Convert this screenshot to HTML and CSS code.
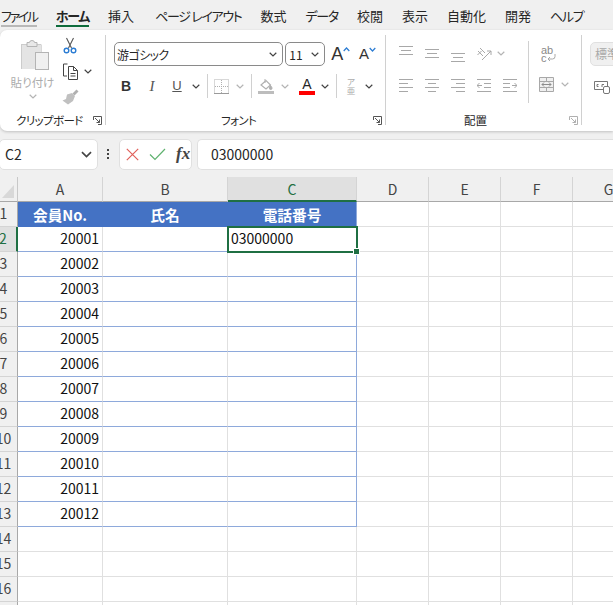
FILE: index.html
```html
<!DOCTYPE html>
<html lang="ja">
<head>
    <meta charset="UTF-8">
    <meta name="viewport" content="width=device-width, initial-scale=1.0">
    <title>Excel</title>
    <link rel="stylesheet" href="styles.css">
</head>
<body>
    <svg class="defs" width="0" height="0">
        <symbol id="chev" viewBox="0 0 8 5"><path d="M.7.8 4 4 7.3.8" fill="none" stroke="currentColor" stroke-width="1.2"/></symbol>
    </svg>

    <nav class="tabs">
        <span class="tab kana tab-file">ファイル</span>
        <span class="tab kana tab-active">ホーム</span>
        <span class="tab tab-insert">挿入</span>
        <span class="tab kana">ページ レイアウト</span>
        <span class="tab">数式</span>
        <span class="tab kana">データ</span>
        <span class="tab">校閲</span>
        <span class="tab">表示</span>
        <span class="tab">自動化</span>
        <span class="tab">開発</span>
        <span class="tab kana">ヘルプ</span>
    </nav>

    <section class="ribbon">
        <div class="group group-clip">
            <div class="group-body clip-body">
                <div class="paste">
                    <svg class="paste-icon" width="28" height="30" viewBox="0 0 28 30">
                        <path d="M.5 29V4.500H6M16 4.500h4V12" fill="#e4e4e4" stroke="#b4b4b4"/>
                        <path d="M.5 4.500h19.500V12H14V29H.500z" fill="#e4e4e4"/>
                        <path d="M6 6.500V2.500h2.500a2.500 2 0 0 1 5 0H16v4z" fill="#e8e8e8" stroke="#b4b4b4"/>
                        <rect x="14.500" y="12.500" width="13" height="17" fill="#f0f0f0" stroke="#b4b4b4"/>
                    </svg>
                    <span class="paste-label">貼り付け</span>
                    <svg class="chev chev-off"><use href="#chev"/></svg>
                </div>
                <div class="clip-tools">
                    <svg class="scissors" width="14" height="17" viewBox="0 0 14 17">
                        <path d="M3.500 1 8.500 11M10.500 1 5.500 11" fill="none" stroke="#555" stroke-width="1.100"/>
                        <circle cx="3.500" cy="13.500" r="2.300" fill="none" stroke="#2b7cd3" stroke-width="1.400"/>
                        <circle cx="10.500" cy="13.500" r="2.300" fill="none" stroke="#2b7cd3" stroke-width="1.400"/>
                    </svg>
                    <div class="copy-row">
                        <svg width="17" height="17" viewBox="0 0 17 17">
                            <path d="M5.500 1H1.500V13H5M6.500 3.500h5l4 4v9h-9zM11.500 3.500v4h4M8.500 10.500h5M8.500 13h5" fill="none" stroke="#444"/>
                        </svg>
                        <svg class="chev"><use href="#chev"/></svg>
                    </div>
                    <svg width="17" height="16" viewBox="0 0 17 16">
                        <path d="M10.500 4.500 14.500.5 16.500 2.500 12.500 6.500z" fill="#b0b0b0"/>
                        <path d="M5 5.500 10 4 13 7 11 12 6 15.500.5 11.500 4 10z" fill="#c0c0c0"/>
                    </svg>
                </div>
            </div>
            <div class="group-foot">
                <span></span><span class="kana-label">クリップボード</span>
                <svg class="launcher" width="9" height="9" viewBox="0 0 9 9"><path d="M.5 4V.5H8.500V8.500H5M2 2 6.500 6.500M6.500 3.500v3h-3" fill="none" stroke="#555"/></svg>
            </div>
        </div>

        <div class="group group-font">
            <div class="group-body">
                <div class="font-top">
                    <div class="combo combo-font"><span class="kana-label">游ゴシック</span><svg class="chev"><use href="#chev"/></svg></div>
                    <div class="combo combo-size"><span>11</span><svg class="chev"><use href="#chev"/></svg></div>
                    <div class="grow-btn"><span class="big-a">A</span><svg width="7" height="5" viewBox="0 0 7 5"><path d="M.7 4 3.500 1 6.300 4" fill="none" stroke="#2b7cd3" stroke-width="1.200"/></svg></div>
                    <div class="grow-btn"><span class="small-a">A</span><svg width="7" height="5" viewBox="0 0 7 5"><path d="M.7 1 3.500 4 6.300 1" fill="none" stroke="#2b7cd3" stroke-width="1.200"/></svg></div>
                </div>
                <div class="font-row">
                    <b class="fmt">B</b>
                    <i class="fmt fmt-i">I</i>
                    <u class="fmt fmt-u">U</u>
                    <svg class="chev"><use href="#chev"/></svg>
                    <span class="rule"></span>
                    <svg width="15" height="15" viewBox="0 0 15 15"><path d="M.5.500h14v14H.500z" fill="none" stroke="#b0b0b0" stroke-dasharray="1 1"/><path d="M7.500 1v13M1 7.500h13" stroke="#b0b0b0" stroke-dasharray="1 1"/><path d="M0 14.500h15" stroke="#9a9a9a"/></svg>
                    <svg class="chev chev-off"><use href="#chev"/></svg>
                    <span class="rule"></span>
                    <svg width="16" height="16" viewBox="0 0 16 16"><path d="M3 7 8 2.500 12.500 7 8 11z" fill="none" stroke="#b0b0b0" stroke-width="1.200"/><path d="M12.500 7.500c1 1.300 1.500 2 1.500 2.700a1.200 1.200 0 0 1-2.600 0c0-.7.400-1.400 1.100-2.700zM7 1v4" fill="#b0b0b0" stroke="#b0b0b0"/><rect y="13" width="16" height="3" fill="#bdbdbd"/></svg>
                    <svg class="chev chev-off"><use href="#chev"/></svg>
                    <div class="font-color"><span>A</span><i class="red-bar"></i></div>
                    <svg class="chev"><use href="#chev"/></svg>
                    <span class="rule"></span>
                    <div class="furigana"><span>ア</span><span>亜</span></div>
                    <svg class="chev"><use href="#chev"/></svg>
                </div>
            </div>
            <div class="group-foot">
                <span></span><span class="kana-label">フォント</span>
                <svg class="launcher" width="9" height="9" viewBox="0 0 9 9"><path d="M.5 4V.5H8.500V8.500H5M2 2 6.500 6.500M6.500 3.500v3h-3" fill="none" stroke="#555"/></svg>
            </div>
        </div>

        <div class="group group-align">
            <div class="group-body align-body">
                <div class="align-grid">
                    <svg width="14" height="16" viewBox="0 0 14 16"><path d="M0 .5h14M2 4.500h10M0 8.500h14"/></svg>
                    <svg width="14" height="16" viewBox="0 0 14 16"><path d="M0 3.500h14M2 7.500h10M0 11.500h14"/></svg>
                    <svg width="14" height="16" viewBox="0 0 14 16"><path d="M0 7.500h14M2 11.500h10M0 15.500h14"/></svg>
                    <svg width="16" height="16" viewBox="0 0 16 16"><path d="M6 14 15 5M15 5h-4M15 5v4M2 5l5 5M1.500 9l4-4M4 2l5 5"/></svg>
                    <svg class="chev chev-off chev-start"><use href="#chev"/></svg>
                    <svg width="14" height="13" viewBox="0 0 14 13"><path d="M0 .5h14M0 4.500h9M0 8.500h14M0 12.500h9"/></svg>
                    <svg width="14" height="13" viewBox="0 0 14 13"><path d="M0 .5h14M3 4.500h8M0 8.500h14M3 12.500h8"/></svg>
                    <svg width="14" height="13" viewBox="0 0 14 13"><path d="M0 .5h14M5 4.500h9M0 8.500h14M5 12.500h9"/></svg>
                    <svg width="14" height="13" viewBox="0 0 14 13"><path d="M0 .5h14M7 4.500h7M7 8.500h7M0 12.500h14M5 6.500H0M2.500 4 0 6.500 2.500 9"/></svg>
                    <svg width="14" height="13" viewBox="0 0 14 13"><path d="M0 .5h14M0 4.500h7M0 8.500h7M0 12.500h14M9 6.500h5M11.500 4 14 6.500 11.500 9"/></svg>
                </div>
                <span class="rule rule-tall"></span>
                <div class="wrap-col">
                    <div class="wrap-icon">
                        <span>ab</span>
                        <span class="wrap-low">c<svg width="9" height="8" viewBox="0 0 9 8"><path d="M8 0v2.500a2.500 2.500 0 0 1-2.500 2.500H1M3 3 1 5l2 2" fill="none" stroke="#a8a8a8"/></svg></span>
                    </div>
                    <div class="merge-row">
                        <svg width="15" height="15" viewBox="0 0 15 15"><path d="M.5.500h14v14H.500zM.5 4.500h14M.5 10.500h14M7.500.500v4M7.500 10.500v4" fill="#f0f0f0" stroke="#a8a8a8"/><path d="M3 7.500h9M5 5.500l-2 2 2 2M10 5.500l2 2-2 2" fill="none" stroke="#8c8c8c"/></svg>
                        <svg class="chev chev-off"><use href="#chev"/></svg>
                    </div>
                </div>
            </div>
            <div class="group-foot">
                <span></span><span>配置</span>
                <svg class="launcher launcher-off" width="9" height="9" viewBox="0 0 9 9"><path d="M.5 4V.5H8.500V8.500H5M2 2 6.500 6.500M6.500 3.500v3h-3" fill="none" stroke="#b0b0b0"/></svg>
            </div>
        </div>

        <div class="group-number">
            <div class="number-combo">標準</div>
            <svg width="16" height="14" viewBox="0 0 16 14"><path d="M.5 1.500h13v8H.500zM4.500 4.500H3v2h1.500M8 7V4.500h2" fill="none" stroke="#777"/><rect x="9.500" y="6.500" width="6" height="7" rx="1.500" fill="#fff" stroke="#777"/></svg>
        </div>
    </section>

    <section class="formula-bar">
        <div class="name-box"><span>C2</span><svg class="chev chev-lg"><use href="#chev"/></svg></div>
        <div class="dots"><i></i><i></i><i></i></div>
        <div class="fx-box">
            <svg width="13" height="13" viewBox="0 0 13 13"><path d="M.8.800 12.200 12.200M12.200.800.800 12.200" stroke="#e0605a" stroke-width="1.200"/></svg>
            <svg width="17" height="13" viewBox="0 0 17 13"><path d="M1 6.500 6 11.500 16 1" fill="none" stroke="#5fb26f" stroke-width="1.200"/></svg>
            <span class="fx">fx</span>
        </div>
        <div class="formula-input">03000000</div>
    </section>

    <main class="sheet">
        <div class="corner"><i></i></div>
        <div class="col-head">A</div>
        <div class="col-head">B</div>
        <div class="col-head col-on">C</div>
        <div class="col-head">D</div>
        <div class="col-head">E</div>
        <div class="col-head">F</div>
        <div class="col-head">G</div>

        <div class="row-head">1</div>
        <div class="cell th">会員No.</div><div class="cell th">氏名</div><div class="cell th th-end">電話番号</div><div class="cell"></div><div class="cell"></div><div class="cell"></div><div class="cell"></div>

        <div class="row-head row-on">2</div>
        <div class="cell td num">20001</div><div class="cell td"></div><div class="cell td td-end active">03000000<i class="handle"></i></div><div class="cell"></div><div class="cell"></div><div class="cell"></div><div class="cell"></div>

        <div class="row-head">3</div>
        <div class="cell td num">20002</div><div class="cell td"></div><div class="cell td td-end"></div><div class="cell"></div><div class="cell"></div><div class="cell"></div><div class="cell"></div>

        <div class="row-head">4</div>
        <div class="cell td num">20003</div><div class="cell td"></div><div class="cell td td-end"></div><div class="cell"></div><div class="cell"></div><div class="cell"></div><div class="cell"></div>

        <div class="row-head">5</div>
        <div class="cell td num">20004</div><div class="cell td"></div><div class="cell td td-end"></div><div class="cell"></div><div class="cell"></div><div class="cell"></div><div class="cell"></div>

        <div class="row-head">6</div>
        <div class="cell td num">20005</div><div class="cell td"></div><div class="cell td td-end"></div><div class="cell"></div><div class="cell"></div><div class="cell"></div><div class="cell"></div>

        <div class="row-head">7</div>
        <div class="cell td num">20006</div><div class="cell td"></div><div class="cell td td-end"></div><div class="cell"></div><div class="cell"></div><div class="cell"></div><div class="cell"></div>

        <div class="row-head">8</div>
        <div class="cell td num">20007</div><div class="cell td"></div><div class="cell td td-end"></div><div class="cell"></div><div class="cell"></div><div class="cell"></div><div class="cell"></div>

        <div class="row-head">9</div>
        <div class="cell td num">20008</div><div class="cell td"></div><div class="cell td td-end"></div><div class="cell"></div><div class="cell"></div><div class="cell"></div><div class="cell"></div>

        <div class="row-head">10</div>
        <div class="cell td num">20009</div><div class="cell td"></div><div class="cell td td-end"></div><div class="cell"></div><div class="cell"></div><div class="cell"></div><div class="cell"></div>

        <div class="row-head">11</div>
        <div class="cell td num">20010</div><div class="cell td"></div><div class="cell td td-end"></div><div class="cell"></div><div class="cell"></div><div class="cell"></div><div class="cell"></div>

        <div class="row-head">12</div>
        <div class="cell td num">20011</div><div class="cell td"></div><div class="cell td td-end"></div><div class="cell"></div><div class="cell"></div><div class="cell"></div><div class="cell"></div>

        <div class="row-head">13</div>
        <div class="cell td num">20012</div><div class="cell td"></div><div class="cell td td-end"></div><div class="cell"></div><div class="cell"></div><div class="cell"></div><div class="cell"></div>

        <div class="row-head">14</div>
        <div class="cell"></div><div class="cell"></div><div class="cell"></div><div class="cell"></div><div class="cell"></div><div class="cell"></div><div class="cell"></div>

        <div class="row-head">15</div>
        <div class="cell"></div><div class="cell"></div><div class="cell"></div><div class="cell"></div><div class="cell"></div><div class="cell"></div><div class="cell"></div>

        <div class="row-head">16</div>
        <div class="cell"></div><div class="cell"></div><div class="cell"></div><div class="cell"></div><div class="cell"></div><div class="cell"></div><div class="cell"></div>

        <div class="row-head row-cut"></div>
        <div class="cell"></div><div class="cell"></div><div class="cell"></div><div class="cell"></div><div class="cell"></div><div class="cell"></div><div class="cell"></div>
    </main>
</body>
</html>
```

FILE: styles.css
```css
* {
    box-sizing: border-box;
}
html, body {
    height: 100%;
}
body {
    margin: 0;
    overflow: hidden;
    background-color: #F0F0F0;
    color: #262626;
    font-family: "Noto Sans CJK JP", "Noto Sans", sans-serif;
    font-size: 14px;
    font-feature-settings: "palt";
}
svg {
    display: block;
}
.defs {
    position: absolute;
}
.chev {
    width: 8px;
    height: 5px;
    color: #444;
}
.chev-off {
    color: #b4b4b4;
}
.chev-lg {
    width: 11px;
    height: 7px;
}
.kana-label {
    letter-spacing: -0.6px;
}

/* タブ */
.tabs {
    display: flex;
    gap: 19px;
    height: 30px;
    padding-left: 1px;
    font-size: 13px;
}
.tab {
    height: 27px;
    padding-top: 4px;
    line-height: 24px;
    white-space: nowrap;
}
.kana {
    letter-spacing: -1.3px;
}
.tab-file {
    letter-spacing: -2.3px;
    border-bottom: 2px solid #B8B8B8;
}
.tab-active {
    font-weight: 700;
    border-bottom: 2px solid #0E6B3B;
}
.tab-insert {
    margin-right: 2px;
}

/* リボン */
.ribbon {
    display: flex;
    height: 101px;
    padding-top: 5px;
    background-color: #FFF;
    border-radius: 7px 0 0 7px;
    box-shadow: 0 1px 3px rgba(0, 0, 0, 0.2);
    overflow: hidden;
}
.group {
    flex: none;
    height: 90px;
    border-right: 1px solid #D0D0D0;
}
.group-clip {
    width: 106px;
}
.group-font {
    width: 280px;
}
.group-align {
    width: 196px;
}
.group-body {
    height: 78px;
}
.group-foot {
    display: grid;
    grid-template-columns: 1fr auto 1fr;
    align-items: center;
    height: 12px;
    padding-right: 3px;
    font-size: 11.5px;
    line-height: 14px;
}
.group-clip .group-foot {
    grid-template-columns: 16px auto 1fr;
}
.group-font .group-foot {
    grid-template-columns: 115px auto 1fr;
}
.group-align .group-foot {
    grid-template-columns: 78px auto 1fr;
}
.launcher {
    justify-self: end;
}
.rule {
    width: 1px;
    height: 24px;
    background-color: #D0D0D0;
}
.rule-tall {
    flex: none;
    height: 62px;
    margin-top: 6px;
}

/* クリップボード */
.clip-body {
    display: flex;
    padding-top: 5px;
}
.paste {
    display: flex;
    flex: none;
    flex-direction: column;
    align-items: center;
    width: 65px;
}
.paste-icon {
    margin-left: 4px;
}
.paste-label {
    margin-top: 2px;
    color: #ACACAC;
    font-size: 11.5px;
    line-height: 20px;
}
.paste .chev {
    margin-top: 2px;
}
.clip-tools {
    display: flex;
    flex-direction: column;
    gap: 9px;
    margin: -3px 0 0 -3px;
}
.scissors {
    margin-left: 1px;
}
.copy-row {
    display: flex;
    align-items: center;
    gap: 5px;
}

/* フォント */
.group-font .group-body {
    padding: 7px 0 0 8px;
}
.font-top {
    display: flex;
    align-items: center;
    height: 24px;
}
.combo {
    display: flex;
    align-items: center;
    justify-content: space-between;
    height: 24px;
    padding: 0 5px 0 2px;
    border: 1px solid #8A8A8A;
    border-radius: 5px;
    font-size: 12px;
}
.combo-font {
    width: 170px;
}
.combo-size {
    width: 40px;
    margin: 0 6px 0 2px;
    padding-left: 3px;
}
.grow-btn {
    display: flex;
    align-items: flex-start;
    width: 27px;
    height: 22px;
    line-height: 22px;
    font-family: "Liberation Sans", sans-serif;
}
.grow-btn svg {
    margin-top: 4px;
}
.big-a {
    font-size: 18px;
    color: #333;
}
.small-a {
    margin-left: 1px;
    font-size: 15px;
    color: #333;
}
.font-row {
    display: grid;
    grid-template-columns: 24px 28px 22px 16px 6px 23px 14px 8px 22px 16px 28px 8px 14px 16px 20px;
    justify-items: center;
    align-items: center;
    height: 24px;
    margin-top: 8px;
}
.fmt {
    font-family: "Liberation Sans", sans-serif;
    font-size: 14px;
    line-height: 18px;
    color: #333;
}
.fmt-i {
    font-family: "Liberation Serif", serif;
    font-size: 15px;
    color: #555;
}
.fmt-u {
    font-size: 13px;
    color: #555;
}
.font-color {
    display: flex;
    flex-direction: column;
    align-items: center;
    width: 16px;
    font-family: "Liberation Sans", sans-serif;
    font-size: 14px;
    line-height: 14px;
}
.red-bar {
    width: 16px;
    height: 4px;
    background-color: #F00;
}
.furigana {
    display: flex;
    flex-direction: column;
    align-items: center;
    color: #ACACAC;
    font-size: 8.5px;
    line-height: 9px;
}

/* 配置 */
.align-body {
    display: flex;
    padding: 11px 0 0 7px;
}
.align-body .rule-tall {
    margin: -5px 0 0 5px;
}
.align-grid {
    display: grid;
    grid-template-columns: repeat(5, 26px);
    grid-auto-rows: 33px;
    justify-items: center;
    align-items: start;
    width: 130px;
}
.align-grid path {
    fill: none;
    stroke: #A8A8A8;
}
.align-grid .chev {
    margin-top: 5px;
}
.align-grid .chev path {
    stroke: currentColor;
}
.chev-start {
    justify-self: start;
}
.wrap-col {
    display: flex;
    flex-direction: column;
    gap: 15px;
    margin-left: 10px;
}
.wrap-icon {
    display: flex;
    flex-direction: column;
    height: 16px;
    padding-left: 2px;
    color: #8A8A8A;
    font-family: "Liberation Sans", sans-serif;
    font-size: 11px;
    line-height: 8px;
}
.wrap-low {
    display: flex;
    align-items: center;
}
.merge-row {
    display: flex;
    align-items: center;
    gap: 7px;
}

/* 数値 */
.group-number {
    display: flex;
    flex-direction: column;
    gap: 14px;
    padding: 7px 0 0 8px;
}
.number-combo {
    width: 60px;
    height: 24px;
    padding-left: 4px;
    background-color: #F0F0F0;
    border: 1px solid #E0E0E0;
    border-radius: 5px;
    color: #A8A8A8;
    font-size: 12px;
    line-height: 22px;
}
.group-number svg {
    margin-left: 4px;
}

/* 数式バー */
.formula-bar {
    display: flex;
    align-items: center;
    height: 46px;
}
.name-box {
    display: flex;
    align-items: center;
    justify-content: space-between;
    flex: none;
    width: 99px;
    height: 31px;
    margin-left: -1px;
    padding: 0 5px;
    background-color: #FFF;
    border: 1px solid #E0E0E0;
    border-radius: 5px;
}
.dots {
    display: flex;
    flex-direction: column;
    gap: 2px;
    margin: 0 10px 0 9px;
}
.dots i {
    width: 2px;
    height: 2px;
    background-color: #444;
}
.fx-box {
    display: flex;
    align-items: center;
    flex: none;
    gap: 10px;
    width: 73px;
    height: 31px;
    padding-left: 6px;
    background-color: #FFF;
    border: 1px solid #E0E0E0;
    border-radius: 5px;
}
.fx {
    color: #444;
    font-family: "Liberation Serif", serif;
    font-size: 17px;
    font-style: italic;
    font-weight: 700;
}
.formula-input {
    flex: 1;
    height: 31px;
    margin-left: 5px;
    padding-left: 13px;
    background-color: #FFF;
    border: 1px solid #E0E0E0;
    border-right: 0;
    border-radius: 5px 0 0 5px;
    line-height: 28px;
}

/* シート */
.sheet {
    display: grid;
    grid-template-columns: 18px 85px 125px 129px 72px 72px 72px 72px;
    grid-auto-rows: 25px;
    height: 428px;
    overflow: hidden;
    background-color: #FFF;
}
.corner {
    position: relative;
    background-color: #F0F0F0;
    border-right: 1px solid #C8C8C8;
    border-bottom: 1px solid #A8A8A8;
}
.corner i {
    position: absolute;
    right: 3px;
    bottom: 3px;
    width: 12px;
    height: 13px;
    background-color: #D8D8D8;
    clip-path: polygon(100% 0, 100% 100%, 0 100%);
}
.col-head {
    display: flex;
    align-items: center;
    justify-content: center;
    background-color: #F0F0F0;
    border-right: 1px solid #D4D4D4;
    border-bottom: 1px solid #A8A8A8;
    color: #444;
}
.col-on {
    background-color: #E0E0E0;
    border-bottom: 2px solid #1F6F43;
    color: #1F6F43;
}
.row-head {
    display: flex;
    align-items: center;
    justify-content: center;
    padding: 0 10px 2px 0;
    overflow: hidden;
    background-color: #F0F0F0;
    border-right: 1px solid #A8A8A8;
    border-bottom: 1px solid #D4D4D4;
    color: #444;
    white-space: nowrap;
}
.row-on {
    background-color: #E0E0E0;
    border-right: 2px solid #1F6F43;
    color: #1F6F43;
}
.cell {
    display: flex;
    align-items: center;
    padding: 0 3px 2px;
    border-right: 1px solid #E0E0E0;
    border-bottom: 1px solid #E0E0E0;
    color: #111;
}
.th {
    justify-content: center;
    padding-bottom: 0;
    background-color: #4472C4;
    border-color: #4472C4;
    color: #FFF;
    font-size: 14.67px;
    font-weight: 700;
}
.td {
    border-bottom-color: #8EA9DB;
}
.td-end, .th-end {
    border-right-color: #8EA9DB;
}
.num {
    justify-content: flex-end;
}
.active {
    position: relative;
    z-index: 1;
    outline: 2px solid #1F6F43;
    outline-offset: -1px;
}
.handle {
    position: absolute;
    right: -3px;
    bottom: -3px;
    width: 5px;
    height: 5px;
    background-color: #1F6F43;
    outline: 1px solid #FFF;
}
```
